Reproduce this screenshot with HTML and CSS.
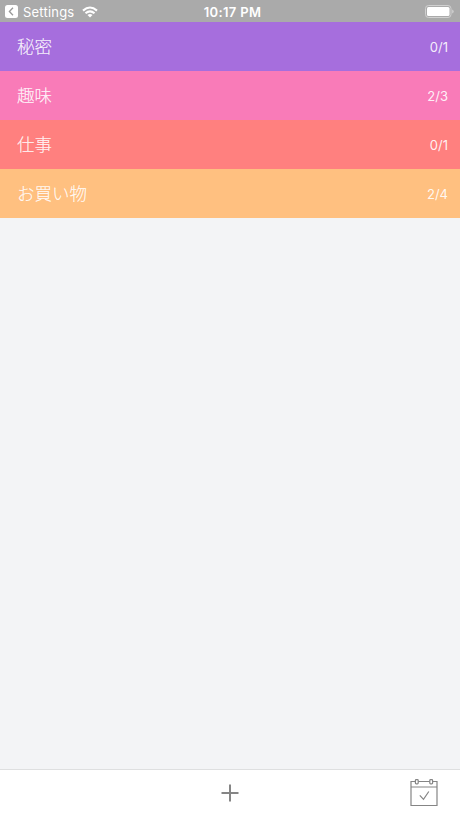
FILE: index.html
```html
<!DOCTYPE html>
<html lang="ja">
<head>
<meta charset="utf-8">
<title>リスト</title>
<link rel="stylesheet" href="styles.css">
</head>
<body>
<header class="status">
  <div class="status-left">
    <svg class="back" viewBox="0 0 13 13"><rect width="13" height="13" rx="2.5" fill="#fff"/><path d="M8 2.700 4.400 6.500 8 10.300" fill="none" stroke="#999" stroke-width="1.3"/></svg>
    <span class="app">Settings</span>
    <svg class="wifi" viewBox="0 0 16 12"><g fill="none" stroke="#fff" stroke-width="2.100"><path d="M1 4.600Q8-1.600 15 4.600"/><path d="M3.500 7.300Q8 3.300 12.500 7.300"/></g><path d="M5.500 9Q8 7.100 10.500 9L8 11.600Z" fill="#fff"/></svg>
  </div>
  <span class="time">10:17 PM</span>
  <svg class="battery" viewBox="0 0 29 13"><rect x=".5" y=".5" width="25.5" height="12" rx="3" fill="none" stroke="#d0d0d0"/><rect x="2" y="2" width="22.5" height="9" rx="1.5" fill="#fff"/><path d="M27.300 4.500q1.300 .5 1.300 2t-1.300 2z" fill="#d8d8d8"/></svg>
</header>
<main class="lists">
  <div class="row purple"><span class="name">秘密</span><span class="count">0/1</span></div>
  <div class="row pink"><span class="name">趣味</span><span class="count">2/3</span></div>
  <div class="row red"><span class="name">仕事</span><span class="count">0/1</span></div>
  <div class="row orange"><span class="name">お買い物</span><span class="count">2/4</span></div>
</main>
<footer class="toolbar">
  <svg class="plus" viewBox="0 0 18 18"><path d="M9 .5v17M.5 9h17" stroke="#858585" stroke-width="2"/></svg>
  <svg class="calendar" viewBox="0 0 28 28"><g fill="none" stroke="#858585" stroke-width="1.200"><path d="M5.400 2.500H1v24h26v-24h-4.400M8.200 2.500h11.600M1 8h26"/><rect x="5.400" y=".6" width="2.800" height="4.200" rx=".8"/><rect x="19.800" y=".6" width="2.800" height="4.200" rx=".8"/><path d="m9.800 16.300 3.700 4 5.300-7.800"/></g></svg>
</footer>
</body>
</html>
```
FILE: styles.css
```css
* { box-sizing: border-box; }
body {
  margin: 0;
  height: 818px;
  display: flex;
  flex-direction: column;
  overflow: hidden;
  background: #f3f4f6;
  font-family: Inter, "Noto Sans CJK JP", sans-serif;
}
svg { display: block; }
.status {
  height: 22px;
  display: grid;
  grid-template-columns: 1fr auto 1fr;
  align-items: center;
  padding: 1px 6px 0 5px;
  background: #aaa;
  color: #fff;
  font-size: 13px;
  line-height: 20px;
}
.status-left { display: flex; align-items: center; }
.back { width: 13px; height: 13px; }
.app { margin-left: 5px; letter-spacing: .2px; }
.wifi { width: 16px; height: 12px; margin-left: 8px; }
.time { font-weight: 600; letter-spacing: .35px; margin-left: 6px; }
.battery { width: 29px; height: 13px; justify-self: end; }
.lists { flex: 1; }
.row {
  height: 49px;
  display: flex;
  align-items: center;
  justify-content: space-between;
  padding: 0 12px 2px 17px;
  color: rgba(255, 255, 255, .9);
}
.name { font-size: 17.5px; font-weight: 300; line-height: 24px; font-family: "Noto Sans CJK JP", sans-serif; -webkit-text-stroke: .15px; }
.count { font-size: 13px; line-height: 20px; padding-top: 2px; }
.purple { background: #a66edd; }
.pink { background: #f97bb8; }
.red { background: #ff807f; }
.orange { background: #ffc080; }
.toolbar {
  height: 49px;
  display: grid;
  grid-template-columns: 1fr auto 1fr;
  align-items: center;
  padding: 0 22px 2px;
  background: #fff;
  border-top: 1px solid #dedfe0;
}
.plus { width: 18px; height: 18px; grid-column: 2; }
.calendar { width: 28px; height: 28px; justify-self: end; }
```
